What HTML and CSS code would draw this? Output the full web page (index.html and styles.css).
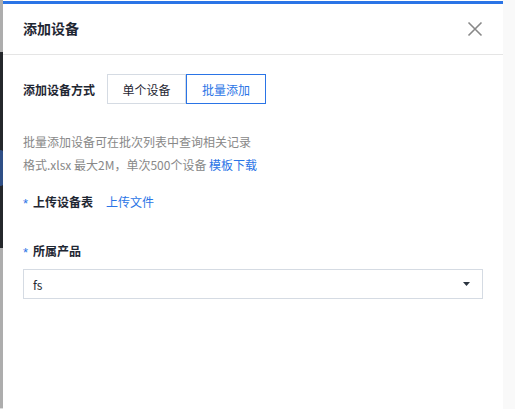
FILE: index.html
```html
<!DOCTYPE html>
<html lang="zh">
<head>
<meta charset="utf-8">
<link rel="stylesheet" href="styles.css">
</head>
<body>
<div class="page">
  <div class="backdrop">
    <div class="bd-top"></div>
    <div class="bd-dark"><div class="bd-blob"></div></div>
    <div class="bd-bottom"></div>
  </div>
  <div class="dialog">
    <div class="header">
      <div class="title">添加设备</div>
      <svg class="close" width="16" height="16" viewBox="0 0 16 16"><path d="M1.5 1.5 L14.5 14.5 M14.5 1.5 L1.5 14.5" stroke="#888" stroke-width="1.6" fill="none"/></svg>
    </div>
    <div class="body">
      <div class="row mode">
        <span class="label">添加设备方式</span>
        <div class="seg">
          <span class="seg-btn">单个设备</span>
          <span class="seg-btn active">批量添加</span>
        </div>
      </div>
      <div class="desc">
        <p>批量添加设备可在批次列表中查询相关记录</p>
        <p>格式.xlsx 最大2M，单次500个设备 <a class="link">模板下载</a></p>
      </div>
      <div class="row upload">
        <span class="req">*</span><span class="label">上传设备表</span>
        <a class="link upload-link">上传文件</a>
      </div>
      <div class="field">
        <div class="row"><span class="req">*</span><span class="label">所属产品</span></div>
        <div class="select">
          <span>fs</span>
          <svg width="7" height="4" viewBox="0 0 7 4"><path d="M0 0 H7 L3.5 4 Z" fill="#2b3440"/></svg>
        </div>
      </div>
    </div>
  </div>
  <div class="gutter"></div>
</div>
</body>
</html>
```
FILE: styles.css
```css
* { box-sizing: border-box; margin: 0; padding: 0; }
html, body { width: 515px; height: 409px; overflow: hidden; background: #fff; }
body { font-family: "Noto Sans CJK SC", "Noto Sans", sans-serif; color: #262b33; }
.page { display: flex; height: 409px; }
.backdrop { width: 3px; display: flex; flex-direction: column; }
.bd-top { height: 52px; background: #adadad; }
.bd-dark { height: 196px; background: #24272b; position: relative; overflow: hidden; }
.bd-blob { position: absolute; left: -4px; top: 98px; width: 8px; height: 36px; background: #2f4f86; border-radius: 4px; }
.bd-bottom { flex: 1; background: #adadad; border-bottom: 1px solid #ddd; }
.dialog { width: 500px; margin-top: 1px; border-top: 3px solid #2a74e6; background: #fff; display: flex; flex-direction: column; }
.header { height: 51px; border-bottom: 1px solid #e5e5e5; display: flex; align-items: center; justify-content: space-between; padding: 0 20px 0 20px; }
.title { font-size: 14px; font-weight: 700; color: #1f2733; margin-top: -2px; }
.close { margin-top: -1px; }
.body { padding: 19px 20px 0 20px; }
.row { display: flex; align-items: center; }
.label { font-size: 12px; font-weight: 700; color: #1f2733; }
.mode .label { width: 84px; }
.seg { display: flex; }
.seg-btn { width: 79px; height: 30px; display: flex; align-items: center; justify-content: center; font-size: 12px; color: #1f2733; border: 1px solid #d5dbe3; }
.seg-btn.active { border-color: #2a74e6; color: #2a74e6; width: 80px; }
.desc { margin-top: 26px; font-size: 12px; color: #888; }
.desc p { line-height: 23px; }
.link { color: #2a74e6; text-decoration: none; }
.upload { margin-top: 17px; font-size: 12px; }
.req { color: #2a74e6; font-family: "Liberation Sans", sans-serif; font-size: 13px; width: 10px; position: relative; top: 2px; }
.upload-link { margin-left: 13px; }
.field { margin-top: 32px; }
.select { margin-top: 10px; height: 30px; width: 460px; border: 1px solid #d5dbe3; display: flex; align-items: center; justify-content: space-between; padding: 0 12px 0 9px; font-size: 12px; color: #262b33; }
.gutter { flex: 1; background: #f9f9f9; }
```
